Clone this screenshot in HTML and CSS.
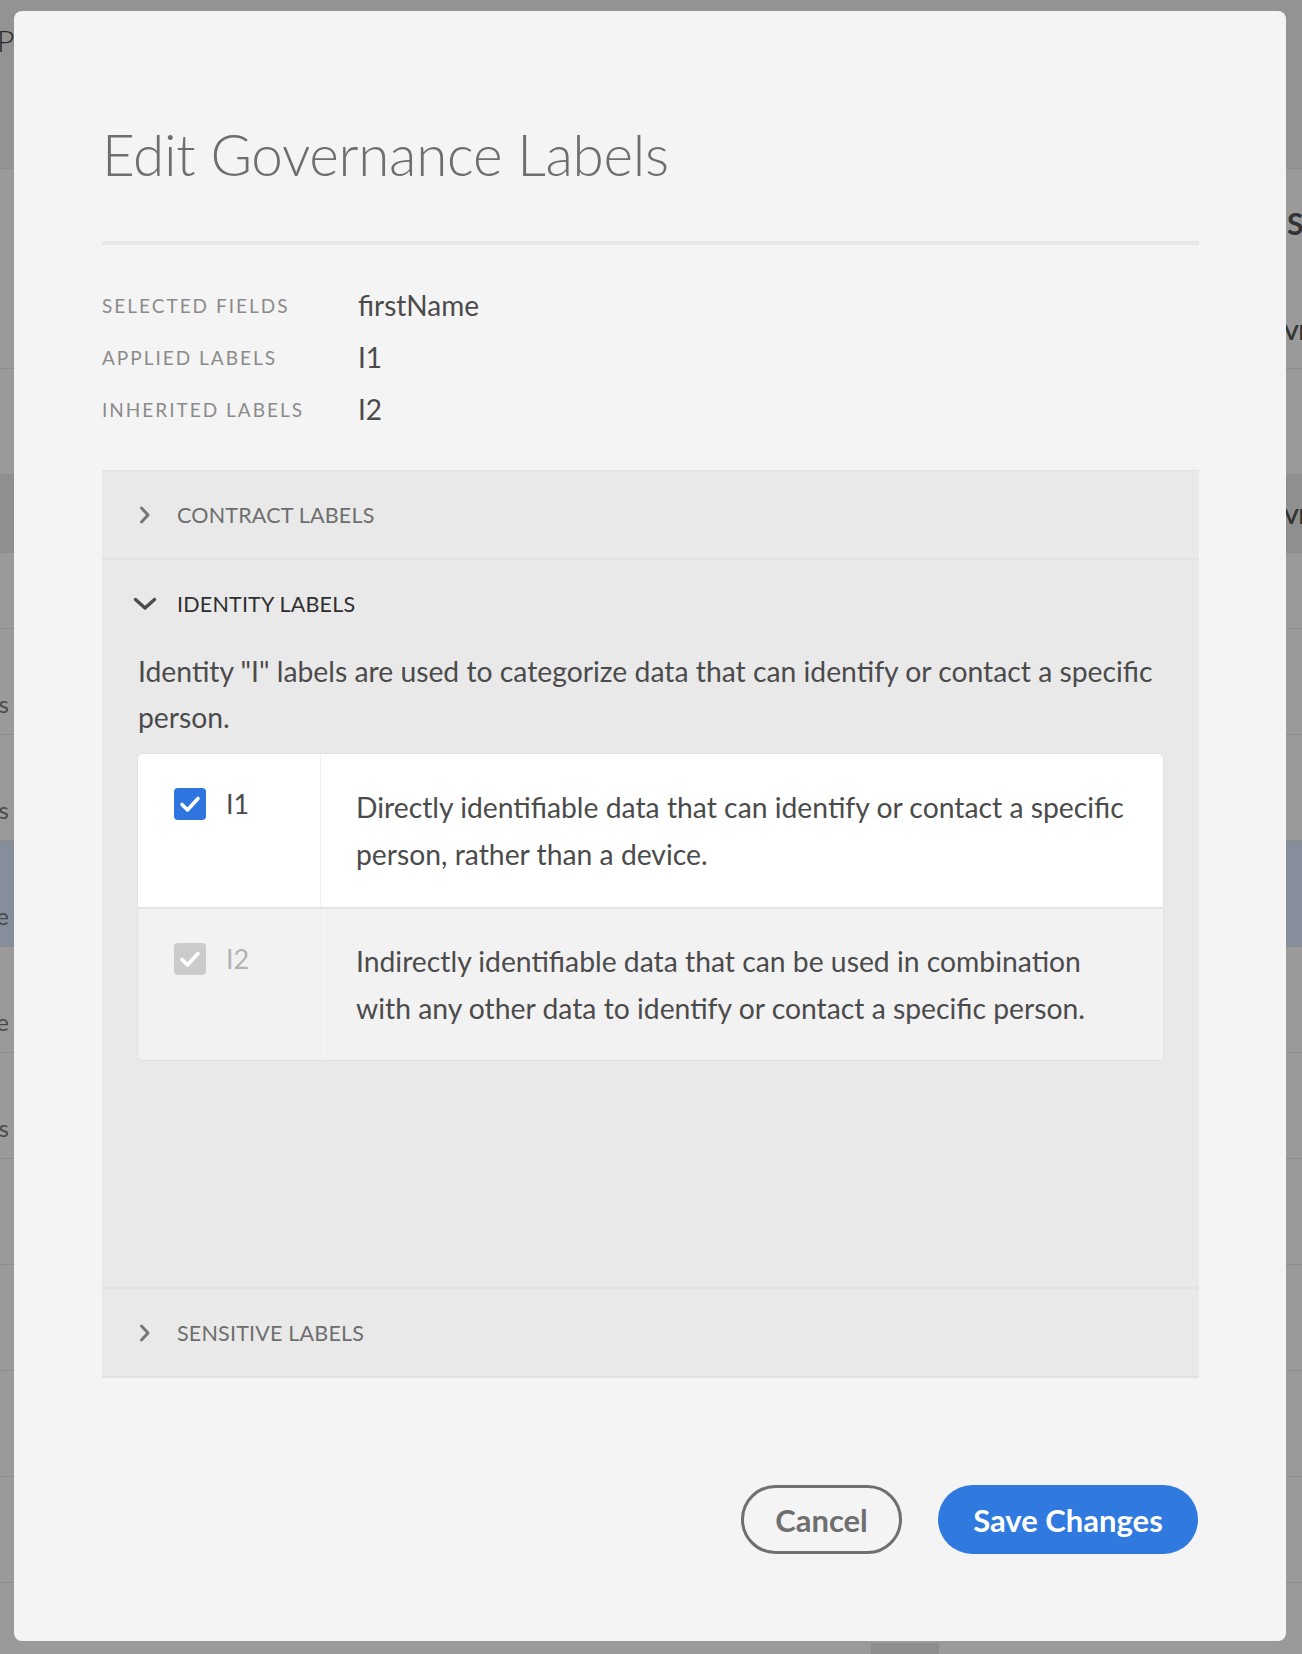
FILE: index.html
```html
<!DOCTYPE html>
<html>
<head>
<meta charset="utf-8">
<link rel="stylesheet" href="styles.css">
</head>
<body>
<div class="page">
  <div class="pg-top"><span class="pg-title">Profile</span></div>
  <div class="pg-row pg-h1"><span class="pg-right big">S</span><span class="pg-right small low">VE</span></div>
  <div class="pg-row pg-h2"></div>
  <div class="pg-row pg-h3"><span class="pg-right small">VE</span></div>
  <div class="pg-row pg-h4"></div>
  <div class="pg-row"><span class="pg-left">s</span></div>
  <div class="pg-row"><span class="pg-left">s</span></div>
  <div class="pg-row pg-sel"><span class="pg-left">e</span></div>
  <div class="pg-row"><span class="pg-left">e</span></div>
  <div class="pg-row"><span class="pg-left">s</span></div>
  <div class="pg-row"></div>
  <div class="pg-row"></div>
  <div class="pg-row"></div>
  <div class="pg-row"></div>
  <div class="pg-row pg-last"><span class="pg-block"></span></div>
</div>

<div class="modal">
  <h1 class="title">Edit Governance Labels</h1>
  <div class="divider"></div>

  <dl class="meta">
    <div class="meta-row"><dt>SELECTED FIELDS</dt><dd>firstName</dd></div>
    <div class="meta-row"><dt>APPLIED LABELS</dt><dd>I1</dd></div>
    <div class="meta-row"><dt>INHERITED LABELS</dt><dd>I2</dd></div>
  </dl>

  <div class="accordion">
    <div class="acc-item">
      <div class="acc-head">
        <svg class="chev-r" width="14" height="22" viewBox="0 0 14 22"><polyline points="3.5,4 10,11 3.5,18" fill="none" stroke="#767676" stroke-width="3" stroke-linecap="round" stroke-linejoin="round"/></svg>
        <span class="acc-title">CONTRACT LABELS</span>
      </div>
    </div>
    <div class="acc-item open">
      <div class="acc-head">
        <svg class="chev-d" width="26" height="16" viewBox="0 0 26 16"><polyline points="3.5,3.5 13,12 22.5,3.5" fill="none" stroke="#4b4b4b" stroke-width="3.4" stroke-linecap="round" stroke-linejoin="round"/></svg>
        <span class="acc-title">IDENTITY LABELS</span>
      </div>
      <div class="acc-body">
        <p class="desc">Identity "I" labels are used to categorize data that can identify or contact a specific person.</p>
        <div class="label-table">
          <div class="lt-row">
            <div class="lt-name">
              <span class="cb checked"><svg width="32" height="32" viewBox="0 0 32 32"><polyline points="8,16.5 13.5,22 24,10.5" fill="none" stroke="#fff" stroke-width="3.6" stroke-linecap="round" stroke-linejoin="round"/></svg></span>
              <span class="lt-code">I1</span>
            </div>
            <div class="lt-desc">Directly identifiable data that can identify or contact a specific person, rather than a device.</div>
          </div>
          <div class="lt-row disabled">
            <div class="lt-name">
              <span class="cb dis"><svg width="32" height="32" viewBox="0 0 32 32"><polyline points="8,16.5 13.5,22 24,10.5" fill="none" stroke="#fff" stroke-width="3.6" stroke-linecap="round" stroke-linejoin="round"/></svg></span>
              <span class="lt-code">I2</span>
            </div>
            <div class="lt-desc">Indirectly identifiable data that can be used in combination with any other data to identify or contact a specific person.</div>
          </div>
        </div>
      </div>
    </div>
    <div class="acc-item last">
      <div class="acc-head">
        <svg class="chev-r" width="14" height="22" viewBox="0 0 14 22"><polyline points="3.5,4 10,11 3.5,18" fill="none" stroke="#767676" stroke-width="3" stroke-linecap="round" stroke-linejoin="round"/></svg>
        <span class="acc-title">SENSITIVE LABELS</span>
      </div>
    </div>
  </div>

  <div class="actions">
    <button class="btn btn-cancel">Cancel</button>
    <button class="btn btn-save">Save Changes</button>
  </div>
</div>
</body>
</html>
```

FILE: styles.css
```css
* { box-sizing: border-box; }

html, body {
  margin: 0;
  padding: 0;
  width: 1302px;
  height: 1654px;
  overflow: hidden;
  background: #9a9a9a;
  font-family: Lato, "Open Sans", sans-serif;
}

/* ---------- dimmed backdrop page ---------- */
.page {
  width: 1302px;
  height: 1654px;
  display: flex;
  flex-direction: column;
}
.pg-top {
  height: 169px;
  background: #939393;
  border-bottom: 1px solid #8d8d8d;
  padding-top: 22px;
}
.pg-title {
  display: block;
  margin-left: -3px;
  font-size: 30px;
  color: #2a2a2a;
  font-weight: 300;
}
.pg-row {
  height: 106px;
  border-bottom: 1px solid #8c8c8c;
  position: relative;
}
.pg-h1 { height: 200px; }
.pg-h2 { height: 106px; }
.pg-h3 { height: 78px; background: #8f8f8f; }
.pg-h4 { height: 76px; }
.pg-sel { background: #878e9b; }
.pg-last { border-bottom: none; flex: 1; }
.pg-right {
  position: absolute;
  left: 1287px;
  font-weight: 700;
  color: #333;
}
.pg-right.big {
  top: 36px;
  font-size: 30px;
}
.pg-right.small {
  top: 28px;
  left: 1284px;
  font-size: 21px;
}
.pg-right.small.low { top: 150px; }
.pg-left {
  position: absolute;
  right: calc(100% - 9px);
  top: 60px;
  font-size: 24px;
  color: #4a4a4a;
}
.pg-block {
  position: absolute;
  left: 871px;
  top: 60px;
  width: 68px;
  height: 20px;
  background: #8d8d8d;
}

/* ---------- modal ---------- */
.modal {
  position: absolute;
  left: 14px;
  top: 11px;
  width: 1272px;
  height: 1630px;
  background: #f4f4f4;
  border-radius: 8px;
  padding: 0 87px 0 88px;
  display: flex;
  flex-direction: column;
}

.title {
  margin: 0;
  padding-top: 107px;
  font-size: 56.6px;
  line-height: 72px;
  font-weight: 300;
  color: #6e6e6e;
  letter-spacing: -0.3px;
}

.divider {
  margin-top: 51px;
  height: 4px;
  background: #e7e7e7;
}

.meta {
  margin: 34px 0 0;
  display: flex;
  flex-direction: column;
}
.meta-row {
  display: flex;
  align-items: center;
  height: 52px;
}
.meta dt {
  width: 256px;
  font-size: 19px;
  letter-spacing: 2px;
  color: #8b8b8b;
}
.meta dd {
  margin: 0;
  font-size: 28px;
  color: #4b4b4b;
}

/* ---------- accordion ---------- */
.accordion {
  margin-top: 35px;
  background: #e9e9e9;
  border-top: 1px solid #e2e2e2;
  border-bottom: 2px solid #e0e0e0;
}
.acc-item {
  border-bottom: 2px solid #e2e2e2;
}
.acc-item.last { border-bottom: none; }
.acc-head {
  height: 87px;
  display: flex;
  align-items: center;
  padding-left: 34px;
}
.chev-r { margin-left: 2px; margin-right: 25px; }
.chev-d { margin-left: -4px; margin-right: 19px; }
.acc-title {
  font-size: 21.5px;
  color: #6e6e6e;
  letter-spacing: 0.2px;
}
.open .acc-title { color: #2f2f2f; }

.acc-body {
  height: 639px;
  padding: 0 35px 0 35px;
}
.desc {
  margin: 0;
  padding-left: 1px;
  font-size: 28.3px;
  line-height: 46px;
  color: #4b4b4b;
  margin-top: 1px;
}

.label-table {
  margin-top: 13px;
  border: 1px solid #e1e1e1;
  border-radius: 6px;
  overflow: hidden;
  background: #f2f2f2;
}
.lt-row {
  display: flex;
  background: #ffffff;
  height: 153px;
}
.lt-row.disabled {
  background: #f2f2f2;
  border-top: 2px solid #e3e3e3;
}
.lt-name {
  width: 183px;
  border-right: 1px solid #efefef;
  padding: 34px 0 0 36px;
  display: flex;
  align-items: flex-start;
}
.cb {
  width: 32px;
  height: 32px;
  border-radius: 4px;
  display: block;
  flex: none;
}
.cb svg { display: block; }
.cb.checked { background: #2e75df; }
.cb.dis { background: #cbcbcb; }
.lt-code {
  margin-left: 20px;
  font-size: 27px;
  line-height: 32px;
  color: #4b4b4b;
}
.disabled .lt-code { color: #b3b3b3; }
.lt-desc {
  flex: 1;
  padding: 30px 30px 0 35px;
  font-size: 28.3px;
  line-height: 47px;
  color: #4b4b4b;
}
.disabled .lt-desc { padding-top: 29px; }

/* ---------- actions ---------- */
.actions {
  margin-top: 107px;
  display: flex;
  justify-content: flex-end;
  gap: 36px;
  padding-right: 1px;
}
.btn {
  height: 69px;
  border-radius: 35px;
  font-family: Lato, "Open Sans", sans-serif;
  font-size: 31px;
  font-weight: 700;
  padding: 0;
  cursor: pointer;
}
.btn-cancel {
  width: 161px;
  background: transparent;
  border: 3px solid #6f6f6f;
  color: #6f6f6f;
}
.btn-save {
  width: 260px;
  background: #3079df;
  border: none;
  color: #ffffff;
}
```
